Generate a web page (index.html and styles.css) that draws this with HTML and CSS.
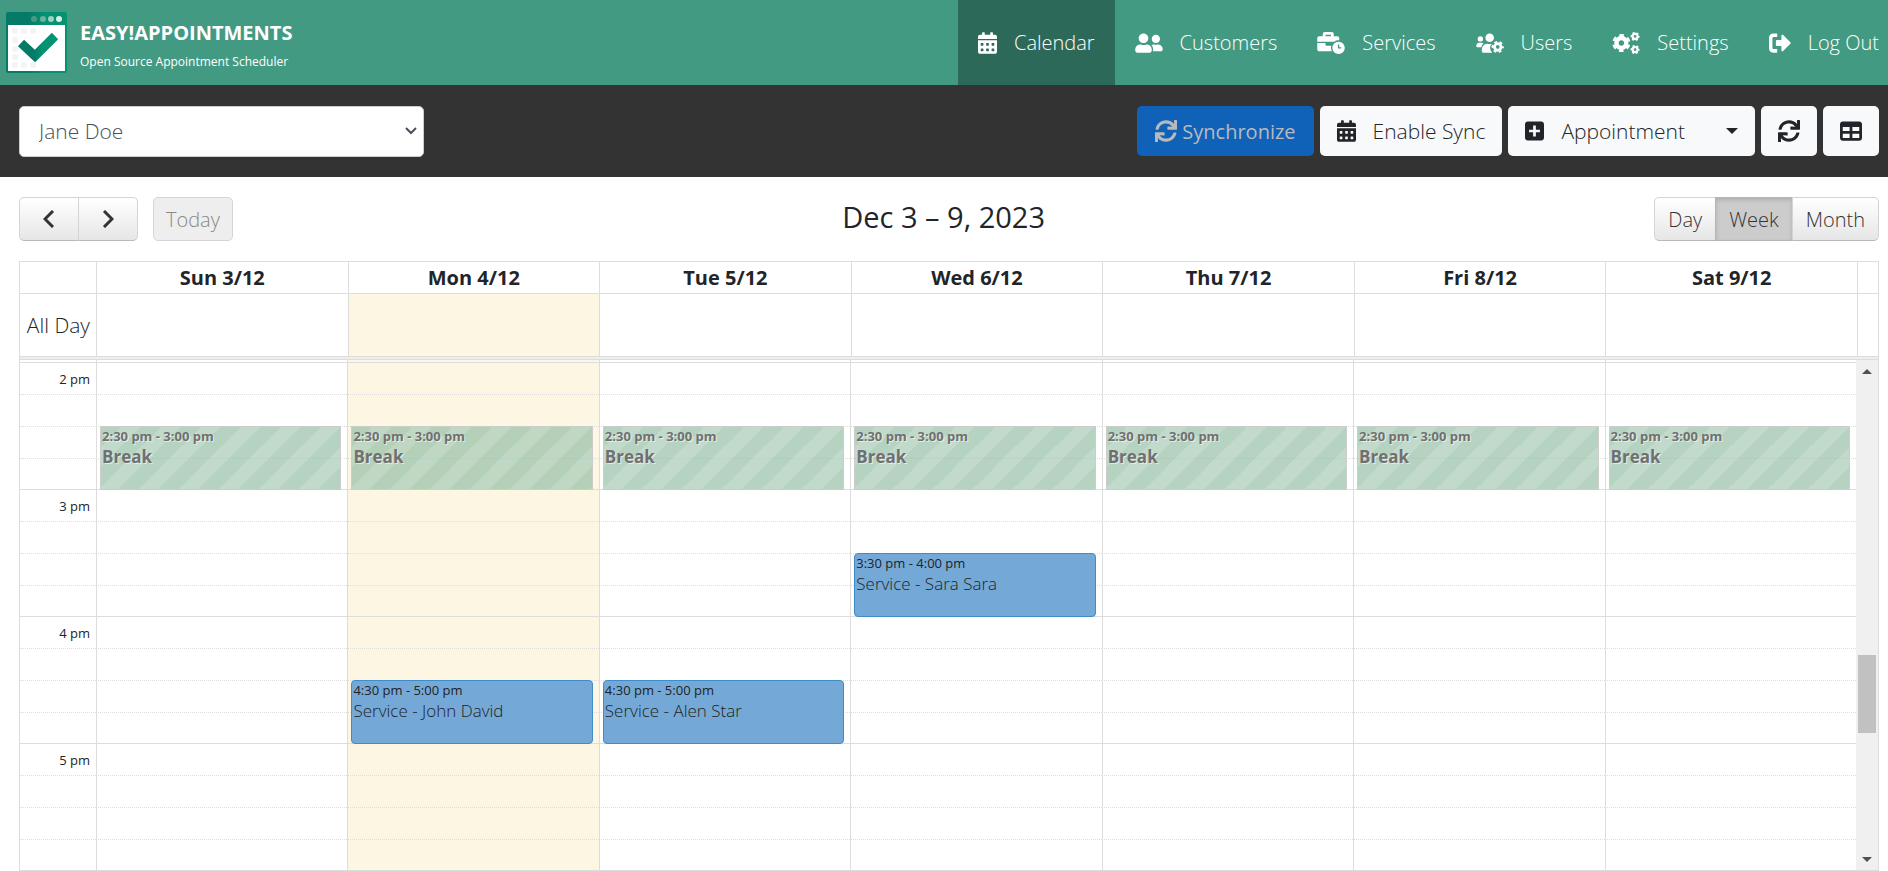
FILE: index.html
```
<!DOCTYPE html>
<html lang="en">
<head>
    <meta charset="UTF-8">
    <meta name="viewport" content="width=device-width, initial-scale=1.0">
    <title>Calendar | Easy!Appointments</title>
    <link rel="stylesheet" href="styles.css">
</head>
<body>
    <!-- Icons -->
    <svg class="icon-defs" aria-hidden="true">
        <symbol id="icon-calendar" viewBox="0 0 448 512">
            <path d="M0 464c0 26.500 21.500 48 48 48h352c26.500 0 48-21.500 48-48V192H0v272zm320-196c0-6.600 5.400-12 12-12h40c6.600 0 12 5.400 12 12v40c0 6.600-5.400 12-12 12h-40c-6.600 0-12-5.400-12-12v-40zm0 128c0-6.600 5.400-12 12-12h40c6.600 0 12 5.400 12 12v40c0 6.600-5.400 12-12 12h-40c-6.600 0-12-5.400-12-12v-40zM192 268c0-6.600 5.400-12 12-12h40c6.600 0 12 5.400 12 12v40c0 6.600-5.400 12-12 12h-40c-6.600 0-12-5.400-12-12v-40zm0 128c0-6.600 5.400-12 12-12h40c6.600 0 12 5.400 12 12v40c0 6.600-5.400 12-12 12h-40c-6.600 0-12-5.400-12-12v-40zM64 268c0-6.600 5.400-12 12-12h40c6.600 0 12 5.400 12 12v40c0 6.600-5.400 12-12 12H76c-6.600 0-12-5.400-12-12v-40zm0 128c0-6.600 5.400-12 12-12h40c6.600 0 12 5.400 12 12v40c0 6.600-5.400 12-12 12H76c-6.600 0-12-5.400-12-12v-40zM400 64h-48V16c0-8.800-7.200-16-16-16h-32c-8.800 0-16 7.200-16 16v48H160V16c0-8.800-7.200-16-16-16h-32c-8.800 0-16 7.200-16 16v48H48C21.500 64 0 85.500 0 112v48h448v-48c0-26.500-21.500-48-48-48z"/>
        </symbol>
        <symbol id="icon-customers" viewBox="0 0 640 512">
            <path d="M192 256c61.900 0 112-50.100 112-112S253.900 32 192 32 80 82.100 80 144s50.100 112 112 112zm76.800 32h-8.300c-20.800 10-43.900 16-68.500 16s-47.600-6-68.500-16h-8.300C51.600 288 0 339.600 0 403.200V432c0 26.500 21.500 48 48 48h288c26.500 0 48-21.500 48-48v-28.800c0-63.600-51.600-115.200-115.200-115.200zM480 256c53 0 96-43 96-96s-43-96-96-96-96 43-96 96 43 96 96 96zm48 32h-3.800c-13.900 4.800-28.600 8-44.200 8s-30.300-3.200-44.200-8H432c-20.400 0-39.200 5.900-55.700 15.400 24.400 26.300 39.700 61.200 39.700 99.800v38.400c0 2.200-.5 4.300-.6 6.400H592c26.500 0 48-21.500 48-48 0-61.900-50.100-112-112-112z"/>
        </symbol>
        <symbol id="icon-services" viewBox="0 0 640 512">
            <path d="M496 224c-79.590 0-144 64.410-144 144s64.410 144 144 144 144-64.410 144-144-64.410-144-144-144zm64 150.290c0 5.340-4.370 9.710-9.710 9.710h-60.570c-5.340 0-9.710-4.370-9.710-9.710v-76.570c0-5.340 4.370-9.710 9.710-9.710h12.570c5.340 0 9.710 4.370 9.710 9.710V352h38.290c5.340 0 9.710 4.370 9.710 9.710v12.580zM496 192c5.400 0 10.720.33 16 .81V144c0-25.600-22.400-48-48-48h-80V48c0-25.600-22.400-48-48-48H176c-25.600 0-48 22.400-48 48v48H48c-25.600 0-48 22.400-48 48v80h395.120c28.600-20.090 63.350-32 100.880-32zM320 96H192V64h128v32zm6.820 224H208c-8.840 0-16-7.160-16-16v-48H0v144c0 25.600 22.400 48 48 48h291.430C327.100 423.960 320 396.820 320 368c0-16.660 2.480-32.720 6.820-48z"/>
        </symbol>
        <symbol id="icon-users" viewBox="0 0 640 512">
            <circle cx="96" cy="160" r="62"/>
            <circle cx="312" cy="132" r="100"/>
            <path d="M0 330c0-50 30-78 70-78h60c16 0 30 5 42 12-28 24-44 50-50 88H22c-12 0-22-10-22-22z"/>
            <path d="M128 440c0-96 50-168 130-168 30 14 78 14 108 0-30 30-44 60-42 107 2 44 20 76 50 101H168c-24 0-40-16-40-40z"/>
            <circle cx="500" cy="348" r="76" fill="none" stroke="currentColor" stroke-width="66"/>
            <circle cx="500" cy="348" r="120" fill="none" stroke="currentColor" stroke-width="44" stroke-dasharray="66 59.660" stroke-dashoffset="33"/>
        </symbol>
        <symbol id="icon-settings" viewBox="0 0 640 512">
            <circle cx="212" cy="256" r="114" fill="none" stroke="currentColor" stroke-width="104"/>
            <circle cx="212" cy="256" r="182" fill="none" stroke="currentColor" stroke-width="60" stroke-dasharray="104 86.600" stroke-dashoffset="-43"/>
            <circle cx="532" cy="104" r="58" fill="none" stroke="currentColor" stroke-width="52"/>
            <circle cx="532" cy="104" r="88" fill="none" stroke="currentColor" stroke-width="36" stroke-dasharray="50 42.150" stroke-dashoffset="25"/>
            <circle cx="532" cy="408" r="58" fill="none" stroke="currentColor" stroke-width="52"/>
            <circle cx="532" cy="408" r="88" fill="none" stroke="currentColor" stroke-width="36" stroke-dasharray="50 42.150" stroke-dashoffset="25"/>
        </symbol>
        <symbol id="icon-logout" viewBox="0 0 512 512">
            <path d="M497 273L329 441c-15 15-41 4.500-41-17v-96H184c-13.300 0-24-10.700-24-24v-96c0-13.300 10.700-24 24-24h104V88c0-21.400 25.900-32 41-17l168 168c9.300 9.400 9.300 24.600 0 34zM192 468v-60c0-6.600-5.400-12-12-12H112c-17.700 0-32-14.300-32-32V148c0-17.700 14.300-32 32-32h68c6.600 0 12-5.400 12-12V44c0-6.600-5.400-12-12-12H96c-53 0-96 43-96 96v256c0 53 43 96 96 96h84c6.600 0 12-5.400 12-12z"/>
        </symbol>
        <symbol id="icon-sync" viewBox="0 0 512 512">
            <path d="M440.650 12.570l4 82.770A247.160 247.160 0 0 0 255.830 8C134.730 8 33.910 94.920 12.290 209.820A12 12 0 0 0 24.090 224h49.050a12 12 0 0 0 11.670-9.260 175.910 175.910 0 0 1 317-56.940l-101.460-4.860a12 12 0 0 0-12.570 12v47.410a12 12 0 0 0 12 12H500a12 12 0 0 0 12-12V12a12 12 0 0 0-12-12h-47.370a12 12 0 0 0-11.980 12.570zM255.830 432a175.610 175.610 0 0 1-146-77.800l101.800 4.870a12 12 0 0 0 12.570-12v-47.400a12 12 0 0 0-12-12H12a12 12 0 0 0-12 12V500a12 12 0 0 0 12 12h47.350a12 12 0 0 0 12-12.600l-4.150-82.570A247.170 247.170 0 0 0 255.830 504c121.110 0 221.930-86.920 243.550-201.820a12 12 0 0 0-11.800-14.180h-49.050a12 12 0 0 0-11.670 9.260A175.860 175.860 0 0 1 255.830 432z"/>
        </symbol>
        <symbol id="icon-plus" viewBox="0 0 448 512">
            <path fill-rule="evenodd" d="M64 32h320c35 0 64 29 64 64v320c0 35-29 64-64 64H64c-35 0-64-29-64-64V96c0-35 29-64 64-64zm128 96v96H96v64h96v96h64v-96h96v-64h-96v-96z"/>
        </symbol>
        <symbol id="icon-table" viewBox="0 0 512 512">
            <path fill-rule="evenodd" d="M64 32h384c35 0 64 29 64 64v320c0 35-29 64-64 64H64c-35 0-64-29-64-64V96c0-35 29-64 64-64zm0 128v96h160v-96zm224 0v96h160v-96zM64 320v96h160v-96zm224 0v96h160v-96z"/>
        </symbol>
    </svg>

    <header class="header">
        <a class="brand" href="#">
            <svg class="brand-logo" viewBox="0 0 61 61" aria-hidden="true">
                <defs>
                    <linearGradient id="logo-bg" x1="0" x2="1" y1="0" y2="0">
                        <stop offset="0.350" stop-color="#047a67"/>
                        <stop offset="0.650" stop-color="#049372"/>
                    </linearGradient>
                </defs>
                <rect width="61" height="61" rx="2" fill="url(#logo-bg)"/>
                <rect x="2" y="13" width="57" height="46" fill="#fff"/>
                <g fill="#f2f4f5">
                    <rect x="6" y="16" width="6" height="6" rx="2"/><rect x="15" y="16" width="6" height="6" rx="2"/><rect x="24" y="16" width="6" height="6" rx="2"/>
                    <rect x="6" y="25" width="6" height="6" rx="2"/><rect x="6" y="34" width="6" height="6" rx="2"/><rect x="6" y="42" width="6" height="6" rx="2"/>
                    <rect x="6" y="50" width="6" height="6" rx="2"/><rect x="15" y="50" width="6" height="6" rx="2"/><rect x="24" y="50" width="6" height="6" rx="2"/>
                </g>
                <circle cx="28" cy="7" r="3" fill="#4a9a80"/>
                <circle cx="37" cy="7" r="3" fill="#6fb0a0"/>
                <circle cx="45" cy="7" r="3" fill="#a5cdc2"/>
                <circle cx="53" cy="7" r="3" fill="#dcebe7"/>
                <path d="M15 31l14 13 20-20" fill="none" stroke="url(#logo-bg)" stroke-width="9" stroke-linejoin="miter"/>
            </svg>
            <span class="brand-text">
                <strong class="brand-name">EASY!APPOINTMENTS</strong>
                <small class="brand-tagline">Open Source Appointment Scheduler</small>
            </span>
        </a>
        <nav class="menu">
            <a class="menu-item active" href="#"><svg class="icon narrow"><use href="#icon-calendar"/></svg>Calendar</a>
            <a class="menu-item" href="#"><svg class="icon wide"><use href="#icon-customers"/></svg>Customers</a>
            <a class="menu-item" href="#"><svg class="icon wide"><use href="#icon-services"/></svg>Services</a>
            <a class="menu-item" href="#"><svg class="icon wide"><use href="#icon-users"/></svg>Users</a>
            <a class="menu-item" href="#"><svg class="icon wide"><use href="#icon-settings"/></svg>Settings</a>
            <a class="menu-item" href="#"><svg class="icon"><use href="#icon-logout"/></svg>Log Out</a>
        </nav>
    </header>

    <div class="toolbar">
        <select class="provider-select" aria-label="Provider">
            <option>Jane Doe</option>
        </select>
        <div class="actions">
            <button class="btn btn-primary" disabled><svg class="icon"><use href="#icon-sync"/></svg>Synchronize</button>
            <button class="btn"><svg class="icon narrow"><use href="#icon-calendar"/></svg>Enable Sync</button>
            <div class="btn-group">
                <button class="btn"><svg class="icon narrow"><use href="#icon-plus"/></svg>Appointment</button>
                <button class="btn btn-caret" aria-label="More"><span class="caret"></span></button>
            </div>
            <button class="btn btn-icon" aria-label="Reload"><svg class="icon"><use href="#icon-sync"/></svg></button>
            <button class="btn btn-icon" aria-label="Table view"><svg class="icon"><use href="#icon-table"/></svg></button>
        </div>
    </div>

    <main class="calendar">
        <div class="calendar-header">
            <div class="calendar-left">
                <div class="fc-group">
                    <button class="fc-btn fc-arrow" aria-label="Previous"><svg viewBox="0 0 12 18"><path d="M10 1L2 9l8 8"/></svg></button>
                    <button class="fc-btn fc-arrow" aria-label="Next"><svg viewBox="0 0 12 18"><path d="M2 1l8 8-8 8"/></svg></button>
                </div>
                <button class="fc-btn fc-today" disabled>Today</button>
            </div>
            <h2 class="calendar-title">Dec 3 – 9, 2023</h2>
            <div class="fc-group">
                <button class="fc-btn">Day</button>
                <button class="fc-btn pressed">Week</button>
                <button class="fc-btn">Month</button>
            </div>
        </div>

        <div class="week">
            <table class="week-table week-head">
                <thead>
                    <tr>
                        <th class="axis"></th>
                        <th>Sun 3/12</th>
                        <th>Mon 4/12</th>
                        <th>Tue 5/12</th>
                        <th>Wed 6/12</th>
                        <th>Thu 7/12</th>
                        <th>Fri 8/12</th>
                        <th>Sat 9/12</th>
                        <th class="gutter"></th>
                    </tr>
                </thead>
                <tbody>
                    <tr class="all-day">
                        <td class="axis">All Day</td><td></td><td class="today"></td><td></td><td></td><td></td><td></td><td></td><td class="gutter"></td>
                    </tr>
                </tbody>
            </table>
            <div class="divider"></div>
            <div class="time-grid">
                <table class="week-table slots">
                    <tr class="edge"><td class="axis"></td><td></td><td class="today"></td><td></td><td></td><td></td><td></td><td></td></tr>

                    <!-- 2 pm -->
                    <tr class="hour"><td class="axis">2 pm</td><td></td><td class="today"></td><td></td><td></td><td></td><td></td><td></td></tr>
                    <tr><td class="axis"></td><td></td><td class="today"></td><td></td><td></td><td></td><td></td><td></td></tr>
                    <tr>
                        <td class="axis"></td>
                        <td><div class="event break"><span class="time">2:30 pm - 3:00 pm</span><span class="title">Break</span></div></td>
                        <td class="today"><div class="event break"><span class="time">2:30 pm - 3:00 pm</span><span class="title">Break</span></div></td>
                        <td><div class="event break"><span class="time">2:30 pm - 3:00 pm</span><span class="title">Break</span></div></td>
                        <td><div class="event break"><span class="time">2:30 pm - 3:00 pm</span><span class="title">Break</span></div></td>
                        <td><div class="event break"><span class="time">2:30 pm - 3:00 pm</span><span class="title">Break</span></div></td>
                        <td><div class="event break"><span class="time">2:30 pm - 3:00 pm</span><span class="title">Break</span></div></td>
                        <td><div class="event break"><span class="time">2:30 pm - 3:00 pm</span><span class="title">Break</span></div></td>
                    </tr>
                    <tr class="last"><td class="axis"></td><td></td><td class="today"></td><td></td><td></td><td></td><td></td><td></td></tr>

                    <!-- 3 pm -->
                    <tr class="hour"><td class="axis">3 pm</td><td></td><td class="today"></td><td></td><td></td><td></td><td></td><td></td></tr>
                    <tr><td class="axis"></td><td></td><td class="today"></td><td></td><td></td><td></td><td></td><td></td></tr>
                    <tr>
                        <td class="axis"></td><td></td><td class="today"></td><td></td>
                        <td><div class="event"><span class="time">3:30 pm - 4:00 pm</span><span class="title">Service - Sara Sara</span></div></td>
                        <td></td><td></td><td></td>
                    </tr>
                    <tr class="last"><td class="axis"></td><td></td><td class="today"></td><td></td><td></td><td></td><td></td><td></td></tr>

                    <!-- 4 pm -->
                    <tr class="hour"><td class="axis">4 pm</td><td></td><td class="today"></td><td></td><td></td><td></td><td></td><td></td></tr>
                    <tr><td class="axis"></td><td></td><td class="today"></td><td></td><td></td><td></td><td></td><td></td></tr>
                    <tr>
                        <td class="axis"></td><td></td>
                        <td class="today"><div class="event"><span class="time">4:30 pm - 5:00 pm</span><span class="title">Service - John David</span></div></td>
                        <td><div class="event"><span class="time">4:30 pm - 5:00 pm</span><span class="title">Service - Alen Star</span></div></td>
                        <td></td><td></td><td></td><td></td>
                    </tr>
                    <tr class="last"><td class="axis"></td><td></td><td class="today"></td><td></td><td></td><td></td><td></td><td></td></tr>

                    <!-- 5 pm -->
                    <tr class="hour"><td class="axis">5 pm</td><td></td><td class="today"></td><td></td><td></td><td></td><td></td><td></td></tr>
                    <tr><td class="axis"></td><td></td><td class="today"></td><td></td><td></td><td></td><td></td><td></td></tr>
                    <tr><td class="axis"></td><td></td><td class="today"></td><td></td><td></td><td></td><td></td><td></td></tr>
                    <tr class="last"><td class="axis"></td><td></td><td class="today"></td><td></td><td></td><td></td><td></td><td></td></tr>
                </table>
                <div class="scrollbar" aria-hidden="true">
                    <span class="scroll-arrow up"></span>
                    <span class="scroll-track"><span class="scroll-thumb"></span></span>
                    <span class="scroll-arrow down"></span>
                </div>
            </div>
        </div>
    </main>
</body>
</html>
```
FILE: styles.css
```
* {
    box-sizing: border-box;
}

body {
    margin: 0;
    font-family: "Open Sans", "Noto Sans", sans-serif;
    font-size: 20px;
    font-weight: 300;
    color: #212529;
    background: #fff;
}

button, select {
    font: inherit;
    color: inherit;
}

.icon-defs {
    position: absolute;
    width: 0;
    height: 0;
}

.icon {
    width: 22px;
    height: 22px;
    fill: currentColor;
    flex: none;
}

.icon.narrow {
    width: 19px;
}

.icon.wide {
    width: 28px;
}

/* Header */
.header {
    display: flex;
    justify-content: space-between;
    height: 85px;
    background: #439a82;
    color: #fff;
}

.brand {
    display: flex;
    align-items: center;
    gap: 13px;
    padding-left: 6px;
    color: inherit;
    text-decoration: none;
}

.brand-logo {
    width: 61px;
    height: 61px;
}

.brand-text {
    display: flex;
    flex-direction: column;
    gap: 7px;
    padding-top: 5px;
}

.brand-name {
    font-size: 20px;
    line-height: 26px;
    font-weight: 700;
}

.brand-tagline {
    font-size: 12px;
    line-height: 18px;
    font-weight: 400;
}

.menu {
    display: flex;
}

.menu-item {
    display: flex;
    align-items: center;
    gap: 17px;
    padding: 0 20px;
    color: inherit;
    text-decoration: none;
}

.menu-item:last-child {
    padding-right: 9px;
}

.menu-item.active {
    background: #2d6959;
}

/* Toolbar */
.toolbar {
    display: flex;
    justify-content: space-between;
    align-items: center;
    height: 92px;
    padding: 0 9px 0 19px;
    background: #333;
}

.provider-select {
    appearance: none;
    width: 405px;
    height: 51px;
    padding: 0 32px 0 19px;
    border: 1px solid #ccc;
    border-radius: 5px;
    background: #fff url("data:image/svg+xml,%3Csvg xmlns='http://www.w3.org/2000/svg' width='12' height='8' viewBox='0 0 12 8'%3E%3Cpath d='M1 1l5 5 5-5' fill='none' stroke='%23495057' stroke-width='2'/%3E%3C/svg%3E") no-repeat right 6px center;
    color: #495057;
    font-size: 21px;
}

.actions {
    display: flex;
    gap: 6px;
}

.btn {
    display: flex;
    align-items: center;
    justify-content: center;
    gap: 17px;
    height: 50px;
    padding: 0 17px;
    border: 0;
    border-radius: 5px;
    background: #f8f9fa;
    font-size: 21px;
    white-space: nowrap;
}

.btn-primary {
    gap: 5px;
    padding: 0 18px;
    background: #1062b8;
    color: #b7babd;
    font-size: 20px;
    font-weight: 400;
}

.btn-group {
    display: flex;
    border-radius: 5px;
    background: #f8f9fa;
}

.btn-group .btn {
    background: none;
}

.btn-group .btn-caret {
    padding-left: 24px;
}

.caret {
    border: 6px solid transparent;
    border-top-color: #212529;
    border-bottom: 0;
}

/* Calendar header */
.calendar {
    padding: 20px 9px 0 19px;
}

.calendar-header {
    display: flex;
    justify-content: space-between;
    align-items: flex-start;
    margin-bottom: 20px;
}

.calendar-left {
    display: flex;
    gap: 15px;
}

.calendar-title {
    margin: 0;
    font-size: 29px;
    line-height: 40px;
    font-weight: 400;
}

.fc-group {
    display: flex;
}

.fc-btn {
    height: 44px;
    padding: 0 12px;
    border: 1px solid #d5d5d5;
    border-bottom-color: #b9b9b9;
    border-radius: 5px;
    background: linear-gradient(#fff, #e6e6e6);
    color: #333;
}

.fc-group .fc-btn {
    padding: 0 13px;
}

.fc-group .fc-btn + .fc-btn {
    margin-left: -1px;
}

.fc-group .fc-btn:not(:first-child) {
    border-top-left-radius: 0;
    border-bottom-left-radius: 0;
}

.fc-group .fc-btn:not(:last-child) {
    border-top-right-radius: 0;
    border-bottom-right-radius: 0;
}

.fc-arrow {
    display: flex;
    align-items: center;
    justify-content: center;
    width: 60px;
}

.fc-arrow svg {
    width: 12px;
    height: 18px;
    fill: none;
    stroke: #333;
    stroke-width: 3;
}

.fc-today {
    border-color: #d5d5d5;
    background: #eee;
    color: #888;
}

.fc-btn.pressed {
    background: #ccc;
    border-color: #b5b5b5;
    box-shadow: inset 0 2px 4px rgba(0, 0, 0, 0.15);
}

/* Week view */
.week {
    border: 1px solid #ddd;
}

.week-table {
    width: 100%;
    table-layout: fixed;
    border-collapse: separate;
    border-spacing: 0;
}

.week-table th,
.week-table td {
    padding: 0;
    border-left: 1px solid #ddd;
}

.week-table .axis {
    width: 76px;
    padding-right: 6px;
    border-left: 0;
    text-align: right;
}

.week-table .gutter {
    width: 21px;
}

.week-head th {
    height: 31px;
    font-size: 20px;
    line-height: 26px;
    font-weight: 700;
}

.all-day td {
    height: 63px;
    border-top: 1px solid #ddd;
    font-size: 21px;
    white-space: nowrap;
}

.today {
    background: #fcf6e3;
}

.divider {
    height: 4px;
    border: 1px solid #ddd;
    border-width: 1px 0;
    background: #eee;
}

.time-grid {
    display: flex;
}

.slots td {
    position: relative;
    height: 32px;
    border-top: 1px dotted #ddd;
    font-size: 13px;
    line-height: 20px;
}

.slots .last td {
    height: 31px;
}

.slots .hour td {
    border-top-style: solid;
}

.slots .edge td {
    height: 2px;
    border-top: 0;
}

.slots .axis {
    font-weight: 400;
}

/* Events */
.event {
    position: absolute;
    top: -1px;
    left: 3px;
    right: 6px;
    z-index: 1;
    height: 64px;
    padding: 0 1px;
    border: 1px solid #3f8ccb;
    border-radius: 4px;
    background: #74a9d7;
    color: #222;
    overflow: hidden;
}

.event .time,
.event .title {
    display: block;
}

.event .time {
    font-size: 13px;
    line-height: 18px;
    font-weight: 400;
}

.event .title {
    font-size: 17px;
    line-height: 24px;
}

.event.break {
    border-color: #ccc;
    border-radius: 0;
    background-color: rgba(143, 187, 161, 0.65);
    background-image: linear-gradient(-45deg, rgba(255, 255, 255, 0.15) 25%, transparent 25%, transparent 50%, rgba(255, 255, 255, 0.15) 50%, rgba(255, 255, 255, 0.15) 75%, transparent 75%);
    background-size: 40px 40px;
    color: #707070;
    text-shadow: 1px 1px 0 rgba(255, 255, 255, 0.6);
}

.event.break .time,
.event.break .title {
    font-weight: 700;
}

/* Scrollbar */
.scrollbar {
    display: flex;
    flex-direction: column;
    align-items: center;
    flex: none;
    width: 22px;
    padding: 9px 0 8px;
    background: #f0f0f0;
}

.scroll-track {
    display: flex;
    flex-direction: column;
    justify-content: end;
    flex: 1;
    width: 18px;
    padding-bottom: 124px;
}

.scroll-thumb {
    height: 78px;
    background: #c1c1c1;
}

.scroll-arrow {
    border: 5px solid transparent;
}

.scroll-arrow.up {
    border-top: 0;
    border-bottom-color: #505050;
}

.scroll-arrow.down {
    border-bottom: 0;
    border-top-color: #505050;
}
```
